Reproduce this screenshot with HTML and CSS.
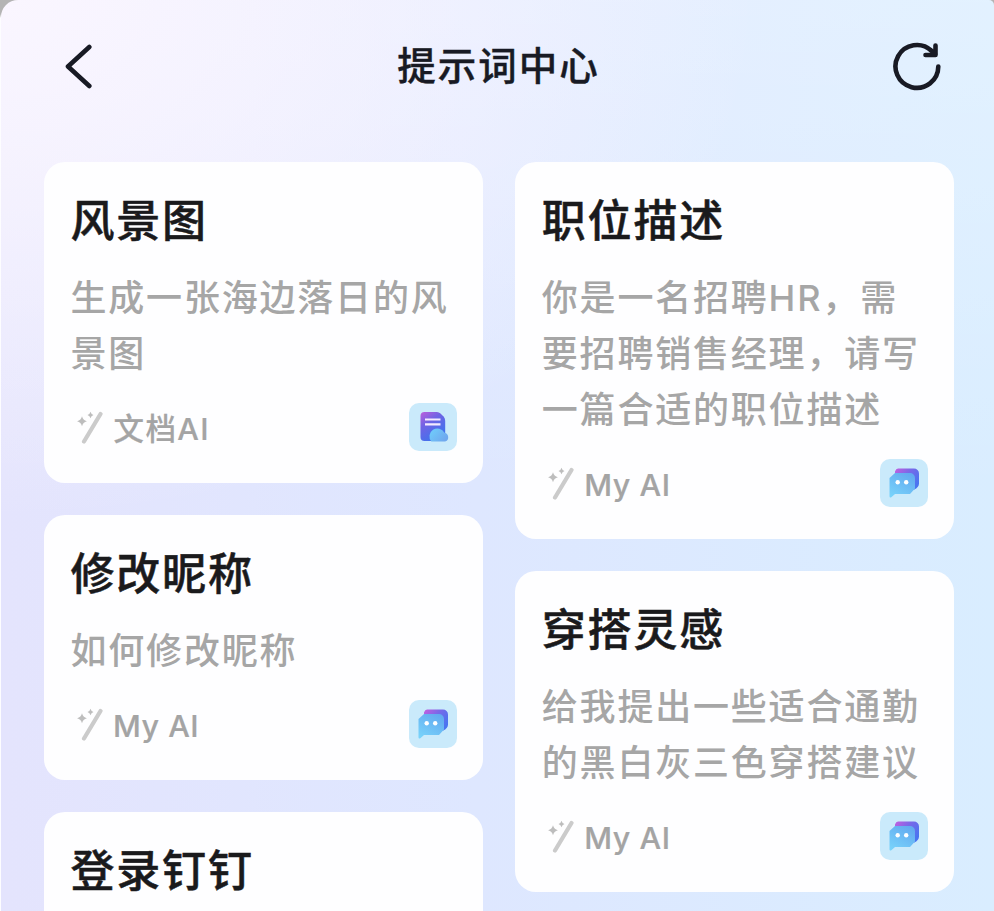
FILE: index.html
```html
<!DOCTYPE html>
<html lang="zh-CN">
<head>
<meta charset="utf-8">
<title>提示词中心</title>
<link rel="stylesheet" href="styles.css">
</head>
<body>
<svg class="defs" width="0" height="0" aria-hidden="true">
  <defs>
    <linearGradient id="back" x1="0" y1="0" x2="1" y2="0.6"><stop offset="0" stop-color="#c45fe0"/><stop offset="0.5" stop-color="#7a68e8"/><stop offset="1" stop-color="#4a74f0"/></linearGradient>
    <linearGradient id="front" x1="0.8" y1="0" x2="0.2" y2="1"><stop offset="0" stop-color="#62a9f0"/><stop offset="1" stop-color="#78d2fa"/></linearGradient>
    <linearGradient id="page" x1="0" y1="0" x2="0.6" y2="1"><stop offset="0" stop-color="#bd5fdc"/><stop offset="0.4" stop-color="#7063e4"/><stop offset="1" stop-color="#3b74ee"/></linearGradient>
    <linearGradient id="cloudfill" x1="0" y1="0" x2="1" y2="0.6"><stop offset="0" stop-color="#6fd0fc"/><stop offset="1" stop-color="#70a8ee"/></linearGradient>
  </defs>
  <symbol id="wand" viewBox="0 0 28 34">
    <path d="M23.500 4 7 31.500" stroke="#cbcbcb" stroke-width="4.200" stroke-linecap="round"/>
    <path d="M5 6.200q.9 4 4.900 5-4 1-4.900 5-.9-4-4.900-5 4-1 4.900-5zM13.500 1.800q.6 2.600 3 3.200-2.400.7-3 3.200-.6-2.500-3-3.200 2.400-.6 3-3.200z" fill="#bdbdbd"/>
  </symbol>
  <symbol id="chat" viewBox="0 0 48 48">
    <path d="M18 9.500H34a5 5 0 0 1 5 5V24.500Q39 28 34.500 30.500H20q-5 0-5-5V12.500q1-3 3-3z" fill="url(#back)"/>
    <path d="M15 14H30a5 5 0 0 1 5 5V29.500L30 35H15L11.300 38.200q-1.800.8-1.800-1V19L15 14z" fill="url(#front)"/>
    <circle cx="17.700" cy="23.300" r="2.200" fill="#fff"/><circle cx="26.200" cy="23.300" r="2.200" fill="#fff"/>
  </symbol>
  <symbol id="doc" viewBox="0 0 48 48">
    <path d="M15.500 9H28q2 0 3.500 1.500l3.300 3.300Q36.200 15.500 36.200 18V34a4 4 0 0 1-4 4H15.500a4 4 0 0 1-4-4V13a4 4 0 0 1 4-4z" fill="url(#page)"/>
    <path d="M16 16.500H31.500M16 21.300H31.500" stroke="#f5eaff" stroke-width="2.200"/>
    <path d="M22.300 38.600A8 8 0 1 1 35.500 29.700A4.600 4.600 0 0 1 36 38.600z" fill="url(#cloudfill)"/>
  </symbol>
</svg>
<div class="screen">
  <header class="bar">
    <svg class="nav" width="48" height="48" viewBox="0 0 48 48" fill="none"><path d="M35.300 6 14 25.500 35.300 45" class="line"/></svg>
    <h1>提示词中心</h1>
    <svg class="nav" width="52" height="52" viewBox="0 0 52 52" fill="none"><path d="M47.300 25.500A21.400 21.400 0 1 1 40.500 9.800L44.500 13M44.500 4.500V14H34.500" class="line"/></svg>
  </header>
  <main class="board">
    <div class="column">
      <article class="card"><h2>风景图</h2><p>生成一张海边落日的风<br>景图</p>
        <footer><svg class="wand"><use href="#wand"/></svg><span>文档AI</span><svg class="badge"><use href="#doc"/></svg></footer></article>
      <article class="card"><h2>修改昵称</h2><p>如何修改昵称</p>
        <footer><svg class="wand"><use href="#wand"/></svg><span class="latin">My AI</span><svg class="badge"><use href="#chat"/></svg></footer></article>
      <article class="card last"><h2>登录钉钉</h2></article>
    </div>
    <div class="column">
      <article class="card"><h2>职位描述</h2><p>你是一名招聘HR，需<br>要招聘销售经理，请写<br>一篇合适的职位描述</p>
        <footer><svg class="wand"><use href="#wand"/></svg><span class="latin">My AI</span><svg class="badge"><use href="#chat"/></svg></footer></article>
      <article class="card"><h2>穿搭灵感</h2><p>给我提出一些适合通勤<br>的黑白灰三色穿搭建议</p>
        <footer><svg class="wand"><use href="#wand"/></svg><span class="latin">My AI</span><svg class="badge"><use href="#chat"/></svg></footer></article>
    </div>
  </main>
</div>
</body>
</html>
```
FILE: styles.css
```css
* { box-sizing: border-box; margin: 0; padding: 0; }
body { height: 911px; overflow: hidden; background: linear-gradient(#b4b4b4 0 14px, #fdfdff 18px); font-family: Inter, "Noto Sans CJK SC", sans-serif; }
.defs { position: absolute; }
.screen {
  height: 911px; margin-left: 1px; overflow: hidden; border-radius: 17px 5px 0 0;
  background:
    radial-gradient(ellipse 760px 520px at 0 0, #faf6ff 0, #faf6ffb0 35%, #faf6ff00 100%),
    linear-gradient(#ffffff40, #ffffff00 500px),
    linear-gradient(to right, #e4e4fd 0, #dee7ff 48%, #d9edff 100%);
}
.bar { height: 162px; padding: 41px 51px 0 53px; display: flex; justify-content: space-between; align-items: flex-start; }
.nav { flex: none; }
.line { stroke: #181a24; stroke-width: 4.600; stroke-linecap: round; stroke-linejoin: round; }
h1 { font-size: 38.500px; line-height: 51px; font-weight: 500; letter-spacing: 2px; color: #181a24; padding-left: 4px; -webkit-text-stroke: .4px #181a24; }
.board { display: flex; gap: 32px; padding-left: 42.500px; }
.column { display: flex; flex-direction: column; gap: 32px; width: 439.300px; }
.card { background: #fefeff; border-radius: 21px; padding: 28px 26px 32px 27px; }
.card h2 { font-size: 44px; line-height: 62px; font-weight: 500; letter-spacing: 1.800px; color: #1a1a1c; margin-bottom: 18px; -webkit-text-stroke: .5px #1a1a1c; }
.card p { font-size: 36px; line-height: 56px; letter-spacing: 1.800px; color: #a6a6a6; font-weight: 500; white-space: nowrap; }
.card footer { display: flex; align-items: center; height: 48px; margin-top: 21px; }
.card span { font-size: 30.500px; letter-spacing: 1.400px; color: #a4a4a4; font-weight: 500; margin-left: 9px; -webkit-text-stroke: .2px #a4a4a4; }
.card .latin { padding-top: 3px; letter-spacing: .5px; margin-left: 8.500px; }
.wand { width: 28px; height: 34px; margin-left: 6px; overflow: visible; fill: none; }
.badge { width: 48px; height: 48px; margin-left: auto; border-radius: 10px; background: #caeafb; }
.last { height: 200px; }
```
